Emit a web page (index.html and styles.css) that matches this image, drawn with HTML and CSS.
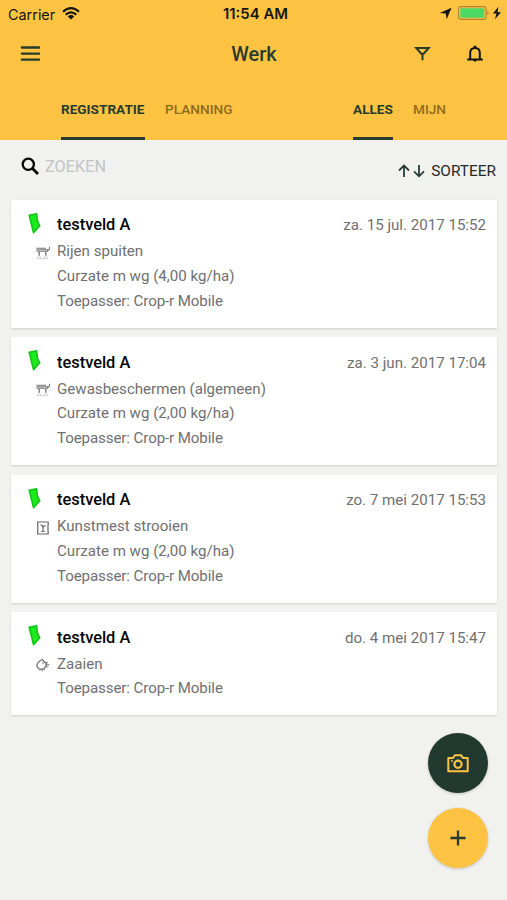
FILE: index.html
```html
<!DOCTYPE html>
<html lang="nl">
<head>
<meta charset="utf-8">
<title>Werk</title>
<link rel="stylesheet" href="styles.css">
</head>
<body>
<svg class="defs" aria-hidden="true">
  <symbol id="field" viewBox="0 0 13 21"><path d="M1.2 2.2 8.6.9 9.4 8 11.8 12.8 5.5 19.6Z" fill="#1ee81e" stroke="#12c418" stroke-width="1.6" stroke-linejoin="round"/></symbol>
  <symbol id="sprayer" viewBox="0 0 14 14"><path d="M.5 2.2H10M.3 3.7H12M.5 5.2H11M11 5.5 13.5 3V.8" fill="none" stroke="#777" stroke-width="1.1"/><path d="M3.2 5.5V10M9.8 5.5V10" stroke="#858585" stroke-width="1.5"/><path d="M3 9.5.8 13M3.4 9.5 5.5 13M9.6 9.5 7.5 13M10 9.5 12.3 13M1 12.7H12" fill="none" stroke="#ccc" stroke-width=".9"/></symbol>
  <symbol id="fertilizer" viewBox="0 0 14 14"><path d="M1 1H12.8M1 13H12.8M1.6 1.5Q2.1 7 1.6 12.8M12.2 1.5Q11.7 7 12.2 12.8" fill="none" stroke="#666" stroke-width="1.2"/><path d="M7 10.5V6.5M4.5 4.2Q7 4 7 6.8Q7 4.8 9.8 4.8M5.3 10.5H8.7" fill="none" stroke="#666" stroke-width="1.2"/></symbol>
  <symbol id="seed" viewBox="0 0 14 14"><path d="M.8 7.2Q2 3.5 6.5 1.5L8 3.7Q10.5 4.5 10.4 7T8 10.5Q4 12.5 2 9.8Q.7 8.5.8 7.2Z" fill="none" stroke="#707070" stroke-width="1.3"/><path d="M8.5 4.6H12M9 6.7H13.5M8.5 8.8H12.5M4 10.5V12.5M6.3 10.5V13.4M8.4 10V12.4M6 4.3 8 6" fill="none" stroke="#808080" stroke-width="1"/></symbol>
</svg>
<div class="app">
  <header class="header">
    <div class="status">
      <div class="status-left"><span>Carrier</span>
        <svg width="18" height="13" viewBox="0 0 18 13"><path d="M1 4.8Q9-2.4 17 4.8M3.7 7.6Q9 3 14.3 7.6" fill="none" stroke="#151611" stroke-width="2.2"/><path d="M5.8 9.4Q9 6.8 12.2 9.4L9 12.6Z" fill="#151611"/></svg>
      </div>
      <b class="clock">11:54 AM</b>
      <div class="status-right">
        <svg width="13" height="13" viewBox="0 0 13 13"><path d="M12.5.8 7.7 12.2 6.7 6.6.8 6Z" fill="#151611"/></svg>
        <svg width="44" height="14" viewBox="0 0 44 14"><rect x=".6" y=".6" width="27.5" height="12.8" rx="2.4" fill="none" stroke="#b18332" stroke-width="1.1"/><rect x="2.3" y="2.3" width="24" height="9.4" rx="1" fill="#4bd964"/><path d="M29.3 4.8Q32.1 7 29.3 9.2Z" fill="#ad8235"/><path d="M40.4.8 35 7.4H38.4L37 13.2 43 6.2H39.6Z" fill="#151611"/></svg>
      </div>
    </div>
    <div class="navbar">
      <svg class="menu" width="20" height="16" viewBox="0 0 20 16"><path d="M1.8 1.5H19.2M1.8 7.6H19.2M1.8 13.7H19.2" stroke="#263d2e" stroke-width="2.3" stroke-linecap="round"/></svg>
      <h1>Werk</h1>
      <div class="nav-icons">
        <svg width="17" height="16" viewBox="0 0 17 16"><path d="M2.2 2H14.8L9.7 7.7H7.3ZM8.5 7.5V14.3" fill="none" stroke="#263d2e" stroke-width="2"/></svg>
        <svg width="18" height="18" viewBox="0 0 18 18"><path d="M4.2 13.8V8Q4.2 3 9 3T13.8 8V13.8M1.2 14.5H16.8" fill="none" stroke="#101510" stroke-width="2"/><path d="M7.7.8H10.3V3H7.7ZM6.8 15H11.2L9 17Z" fill="#101510"/></svg>
      </div>
    </div>
    <nav class="tabs">
      <span class="tab active registratie">REGISTRATIE</span><span class="tab planning">PLANNING</span>
      <span class="tab active alles">ALLES</span><span class="tab mijn">MIJN</span>
    </nav>
  </header>
  <div class="tools">
    <div class="search"><svg width="19" height="19" viewBox="0 0 19 19"><circle cx="7.3" cy="7.3" r="5.6" fill="none" stroke="#050505" stroke-width="2.3"/><path d="M11.5 11.5 17 17" stroke="#050505" stroke-width="2.8"/></svg><span>ZOEKEN</span></div>
    <div class="sort"><svg width="28" height="14" viewBox="0 0 28 14"><path d="M6 13V1.5M1 6.5 6 1.5 11 6.5M21 1V12.3M16 7.3 21 12.3 26 7.3" fill="none" stroke="#263d38" stroke-width="1.8"/></svg><span>SORTEER</span></div>
  </div>
  <main class="list">
    <article class="card">
      <svg class="field"><use href="#field"/></svg><h2>testveld A</h2><time>za. 15 jul. 2017 15:52</time>
      <svg class="kind"><use href="#sprayer"/></svg><p>Rijen spuiten</p><p>Curzate m wg (4,00 kg/ha)</p><p class="user">Toepasser: Crop-r Mobile</p>
    </article>
    <article class="card">
      <svg class="field"><use href="#field"/></svg><h2>testveld A</h2><time>za. 3 jun. 2017 17:04</time>
      <svg class="kind"><use href="#sprayer"/></svg><p>Gewasbeschermen (algemeen)</p><p>Curzate m wg (2,00 kg/ha)</p><p class="user">Toepasser: Crop-r Mobile</p>
    </article>
    <article class="card">
      <svg class="field"><use href="#field"/></svg><h2>testveld A</h2><time>zo. 7 mei 2017 15:53</time>
      <svg class="kind"><use href="#fertilizer"/></svg><p>Kunstmest strooien</p><p>Curzate m wg (2,00 kg/ha)</p><p class="user">Toepasser: Crop-r Mobile</p>
    </article>
    <article class="card">
      <svg class="field"><use href="#field"/></svg><h2>testveld A</h2><time>do. 4 mei 2017 15:47</time>
      <svg class="kind"><use href="#seed"/></svg><p>Zaaien</p><p class="user">Toepasser: Crop-r Mobile</p>
    </article>
  </main>
  <div class="fabs">
    <div class="fab dark"><svg width="22" height="19" viewBox="0 0 22 19"><path d="M1.3 4H6L8 1.2H14L16 4H20.7V17.3H1.3Z" fill="none" stroke="#ffc343" stroke-width="2" stroke-linejoin="round"/><circle cx="11" cy="10.3" r="3.6" fill="none" stroke="#ffc343" stroke-width="2.2"/><circle cx="5" cy="7" r="1" fill="#ffc343"/></svg></div>
    <div class="fab"><svg width="16" height="16" viewBox="0 0 16 16"><path d="M8 .4V15.6M.4 8H15.6" stroke="#263d2e" stroke-width="2.3"/></svg></div>
  </div>
</div>
</body>
</html>
```
FILE: styles.css
```css
* { box-sizing: border-box; }
body { margin: 0; background: #f1f1ef; font-family: Roboto, "Liberation Sans", sans-serif; }
h1, h2, p { margin: 0; font-weight: 400; }
svg { display: block; flex: none; }
.defs { display: none; }
.app { position: relative; width: 507px; height: 900px; overflow: hidden; background: #f1f1ef; }
.header { height: 140px; background: #ffc343; color: #263d2e; }
.status { display: grid; grid-template-columns: 1fr auto 1fr; align-items: center; height: 28px; padding: 0 5px 0 8px; color: #151611; font-family: Inter, sans-serif; font-size: 14.4px; }
.status-left, .status-right { display: flex; align-items: center; }
.status-left { gap: 7px; }
.status-left svg { margin-top: -2px; }
.status-right { justify-content: flex-end; gap: 6px; margin-top: -2px; }
.clock { margin-left: 1px; font-weight: 600; font-size: 14.9px; }
.navbar { display: grid; grid-template-columns: 1fr auto 1fr; align-items: center; height: 51px; padding: 0 23px 0 20px; }
h1 { padding-left: 4px; font-size: 20px; font-weight: 500; }
.nav-icons { display: flex; justify-content: flex-end; align-items: center; gap: 35px; }
.tabs { display: flex; height: 61px; padding-left: 61px; font-size: 13.6px; font-weight: 500; line-height: 60px; }
.tab { color: #8d6c20; white-space: nowrap; }
.active { color: #263d2e; font-weight: 700; border-bottom: 3px solid #263d2e; }
.registratie { width: 84px; margin-right: 20px; }
.planning { width: 188px; letter-spacing: .05px; }
.alles { width: 40px; margin-right: 20px; }
.tools { display: flex; justify-content: space-between; height: 60px; padding: 0 11px 0 21px; }
.search { display: flex; gap: 5px; height: 53px; align-items: center; font-size: 16.3px; color: #c4c4c4; }
.sort { display: flex; gap: 5px; height: 61px; align-items: center; font-size: 15.4px; color: #252a28; }
.list { display: flex; flex-direction: column; gap: 9.8px; padding: 0 10px 0 11px; }
.card { display: grid; grid-template-columns: 37px 1fr auto; grid-auto-rows: 24.8px; align-items: center; padding: 13px 11px 15.5px 9px; background: #fff; box-shadow: 0 1px 2px #00000026; font-size: 15.1px; color: #707070; white-space: nowrap; }
.card h2 { margin-top: -1px; font-size: 16.4px; font-weight: 500; color: #050505; }
.card p { grid-column: 2 / 4; padding-top: 2px; }
.card .user { letter-spacing: -.1px; }
.field { width: 13px; height: 21px; margin-left: 8px; margin-top: -4px; }
.kind { width: 14px; height: 14px; margin-left: 16px; margin-top: 5px; }
.fabs { position: absolute; right: 19px; bottom: 32px; display: flex; flex-direction: column; gap: 15px; }
.fab { display: flex; align-items: center; justify-content: center; width: 60px; height: 60px; border-radius: 50%; background: #ffc343; box-shadow: 0 1px 3px #0003; }
.dark { background: #21392f; }
```
